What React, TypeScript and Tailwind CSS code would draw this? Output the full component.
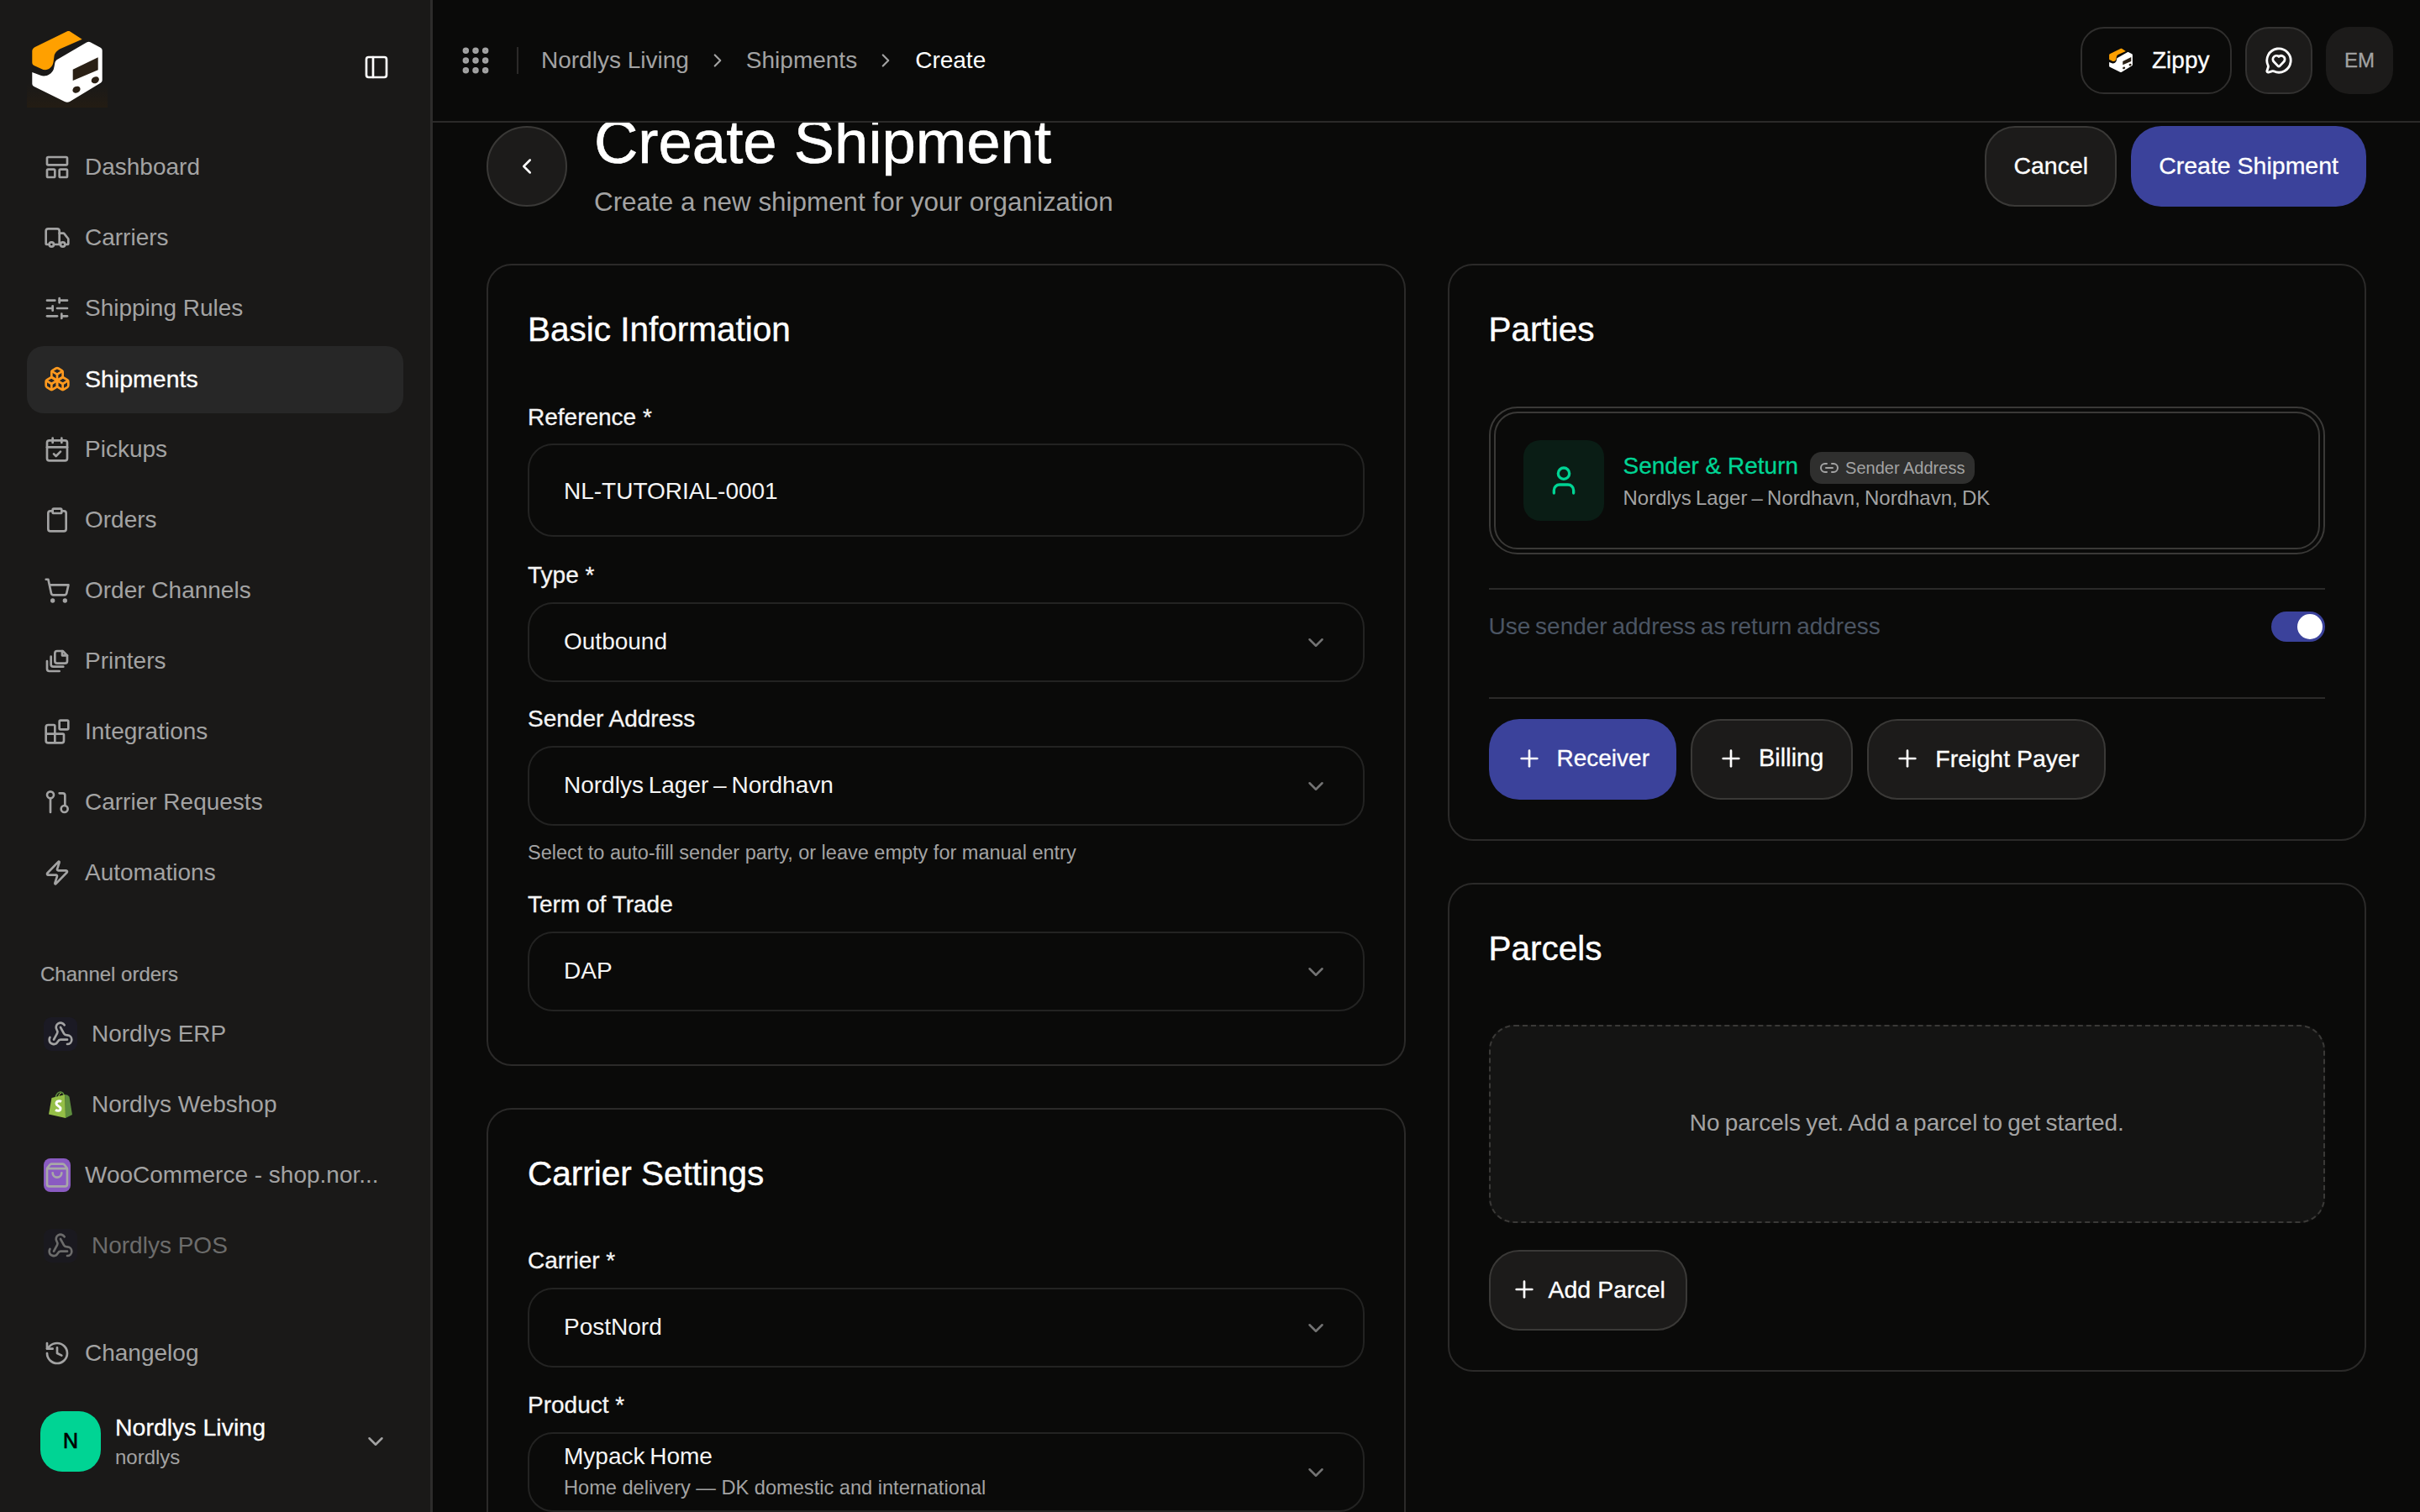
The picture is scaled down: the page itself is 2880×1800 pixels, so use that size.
import React from "react";
import {
  LayoutPanelTop, Truck, SlidersHorizontal, Boxes, CalendarCheck, Clipboard, ShoppingCart, Blocks, Zap,
  History, ChevronDown, ChevronRight, ChevronLeft, PanelLeft, Grip, MessageCircleHeart, Webhook, ShoppingBag,
  User, Link2, Plus,
} from "lucide-react";

const Logo = ({ className }: { className?: string }) => (
  <svg viewBox="0 0 96 96" className={className}>
    <path d="M48 5.300c1-.4 2-.4 3 0L65.700 14.700 40 26c-4 2-7 5-7.500 9l-1 7c-1 6-6 10-12 9l-11-5c-1.500-.7-2.200-2-2.200-3.500V29c0-2 1-4 3.400-5z" fill="#ffa000" />
    <path d="M71 18.500c2-1 3.500-1 5 0l11.700 6.300c1.400.8 2 2 2 3.500v35c0 1.500-.7 2.800-2 3.500L51 89c-2 1-4 1-6 0L8.500 71c-1.500-.7-2.200-2-2.200-3.500V54l10 3.800c6 2 13-1 15.500-7.300.8-2.500 1-5 1.500-7.500.5-2 1.500-3.500 3.500-4.500z" fill="#fff" />
    <path d="M54.700 50.700 84.700 36.300v15L54.700 64z" fill="#2a2015" />
    <ellipse cx="59" cy="74.700" rx="4.800" ry="3.800" transform="rotate(-28 59 74.700)" fill="#2a2015" />
    <ellipse cx="81.300" cy="63.300" rx="4.800" ry="3.800" transform="rotate(-28 81.300 63.300)" fill="#2a2015" />
  </svg>
);

const PrintersIcon = ({ className }: { className?: string }) => (
  <svg viewBox="0 0 24 24" fill="none" stroke="currentColor" strokeWidth="2" strokeLinecap="round" strokeLinejoin="round" className={className}>
    <path d="M10 5a2 2 0 0 1 2-2h5l4 4v5a2 2 0 0 1-2 2h-7a2 2 0 0 1-2-2z" />
    <path d="M16.500 3v4H21" />
    <path d="M6.500 8v7a2 2 0 0 0 2 2h9" />
    <path d="M3 12v7a2 2 0 0 0 2 2h9" />
  </svg>
);

const RequestsIcon = ({ className }: { className?: string }) => (
  <svg viewBox="0 0 24 24" fill="none" stroke="currentColor" strokeWidth="2" strokeLinecap="round" strokeLinejoin="round" className={className}>
    <circle cx="6" cy="5.500" r="3" />
    <path d="M6 8.500V21" />
    <path d="M14 4h3a2 2 0 0 1 2 2v9" />
    <circle cx="18.500" cy="18" r="3" />
  </svg>
);

const navItems = [
  { label: "Dashboard", Icon: LayoutPanelTop },
  { label: "Carriers", Icon: Truck },
  { label: "Shipping Rules", Icon: SlidersHorizontal },
  { label: "Shipments", Icon: Boxes, active: true },
  { label: "Pickups", Icon: CalendarCheck },
  { label: "Orders", Icon: Clipboard },
  { label: "Order Channels", Icon: ShoppingCart },
  { label: "Printers", Icon: PrintersIcon },
  { label: "Integrations", Icon: Blocks },
  { label: "Carrier Requests", Icon: RequestsIcon },
  { label: "Automations", Icon: Zap },
];

const WebhookBox = () => (
  <span className="flex h-[40px] w-[40px] shrink-0 items-center justify-center rounded-[9px] bg-[#1b1a24]">
    <Webhook className="h-[32px] w-[32px] text-[#a3a3a3]" strokeWidth={2} />
  </span>
);

const ShopifyBox = () => (
  <span className="flex h-[40px] w-[40px] shrink-0 items-center justify-center">
    <svg viewBox="0 0 28 32" className="h-[32px] w-[28px]">
      <path d="M8 8.500C8.500 3 12 .5 14.500 1c2.500.5 3.500 3 3.500 5" fill="none" stroke="#5e8e3e" strokeWidth="1.500" />
      <path d="M11.500 7.500C12 4 13.500 2.500 15 2.500" fill="none" stroke="#95bf47" strokeWidth="1.200" />
      <path d="M0 27.500 3.500 8 19.500 4 20 32z" fill="#95bf47" />
      <path d="M19.500 4l3 .8 2 2L28 28l-8 4z" fill="#5e8e3e" />
      <path d="M15 12.500c-2-1.200-6-1-6 2.200 0 3 5 3 5 6 0 3-3.500 3.200-6 1.500" fill="none" stroke="#fff" strokeWidth="3" />
    </svg>
  </span>
);

const WooBox = () => (
  <span className="flex h-[40px] w-[32px] shrink-0 items-center justify-center rounded-[8px] bg-[#8a5bc2]">
    <ShoppingBag className="h-[32px] w-[32px] text-[#a8a8a8]" strokeWidth={2} />
  </span>
);

const Label = ({ children }: { children: React.ReactNode }) => (
  <div className="text-[28px] leading-[36px] text-[#f5f5f5] [-webkit-text-stroke:0.3px_currentColor]">{children}</div>
);

const Select = ({ value, sub }: { value: string; sub?: string }) => (
  <div className="mt-[14px] flex h-[95px] items-center justify-between rounded-[30px] border-2 border-[#232322] pl-[41px] pr-[41px]">
    <div>
      <div className={sub ? "text-[28px] leading-[36px] text-[#f5f5f5] [word-spacing:-2px]" : "-translate-y-[1px] text-[28px] leading-[36px] text-[#f5f5f5] [word-spacing:-2px]"}>{value}</div>
      {sub && <div className="text-[23.600px] leading-[38px] text-[#a3a3a3]">{sub}</div>}
    </div>
    <ChevronDown className="h-[30px] w-[30px] text-[#737373]" strokeWidth={2} />
  </div>
);

const Btn = ({ children, className }: { children: React.ReactNode; className: string }) => (
  <button className={"flex h-[96px] items-center rounded-[36px] pb-[2px] text-white [-webkit-text-stroke:0.3px_currentColor] " + className}>
    {children}
  </button>
);

const Card = ({ title, children }: { title: string; children: React.ReactNode }) => (
  <section className="rounded-[30px] border-2 border-[#2b2a29] px-[47px] pb-[47px] pt-[48px]">
    <h2 className="text-[40.500px] leading-[56px] text-white [-webkit-text-stroke:0.4px_currentColor]">{title}</h2>
    {children}
  </section>
);

export default function App() {
  return (
    <div className="flex h-screen w-screen overflow-hidden bg-[#0a0a09] font-['Liberation_Sans',sans-serif] text-white">
      <aside className="flex w-[515px] shrink-0 flex-col border-r-[3px] border-[#2d2c2b] bg-[#1a1918] pb-[48px]">
        <div className="flex items-center justify-between pl-[32px] pr-[48px] pt-[32px]">
          <div className="h-[96px] w-[96px] bg-gradient-to-b from-transparent from-70% to-[#231c13]">
            <Logo className="h-[96px] w-[96px]" />
          </div>
          <PanelLeft className="h-[32px] w-[32px] text-white" strokeWidth={2} />
        </div>
        <nav className="mt-[32px] flex flex-col gap-[4px] px-[32px]">
          {navItems.map(({ label, Icon, active }) => (
            <div
              key={label}
              className={
                active
                  ? "flex h-[80px] items-center gap-[17px] rounded-[20px] bg-[#272727] pb-[2px] pl-[20px] text-[28.500px] text-white [-webkit-text-stroke:0.3px_currentColor]"
                  : "flex h-[80px] items-center gap-[17px] rounded-[20px] pb-[2px] pl-[20px] text-[28px] text-[#a3a3a3]"
              }
            >
              <Icon className={active ? "h-[32px] w-[32px] text-[#ff9a1f]" : "h-[32px] w-[32px]"} />
              {label}
            </div>
          ))}
        </nav>
        <div className="ml-[48px] mt-[64px] text-[24px] leading-[32px] text-[#a3a3a3] [-webkit-text-stroke:0.2px_currentColor]">Channel orders</div>
        <div className="mt-[15px] flex flex-col gap-[4px] pl-[52px] pr-[32px] text-[28px] text-[#a3a3a3]">
          <div className="flex h-[80px] items-center gap-[17px]"><WebhookBox />Nordlys ERP</div>
          <div className="flex h-[80px] items-center gap-[17px]"><ShopifyBox />Nordlys Webshop</div>
          <div className="flex h-[80px] items-center gap-[17px]"><WooBox /><span className="truncate">WooCommerce - shop.nor...</span></div>
          <div className="flex h-[80px] items-center gap-[17px] opacity-60"><WebhookBox />Nordlys POS</div>
        </div>
        <div className="mt-auto flex h-[80px] items-center gap-[17px] pl-[52px] text-[28px] text-[#a3a3a3]">
          <History className="h-[32px] w-[32px]" />
          Changelog
        </div>
        <div className="mt-[29px] flex items-center pl-[48px] pr-[50px]">
          <div className="flex h-[72px] w-[72px] items-center justify-center rounded-[26px] bg-[#00d494] text-[25px] text-black [-webkit-text-stroke:0.7px_currentColor]">N</div>
          <div className="ml-[17px] flex-1">
            <div className="text-[28.500px] leading-[38px] text-white [-webkit-text-stroke:0.3px_currentColor]">Nordlys Living</div>
            <div className="text-[24px] leading-[34px] text-[#a3a3a3]">nordlys</div>
          </div>
          <ChevronDown className="h-[30px] w-[30px] text-[#a3a3a3]" />
        </div>
      </aside>

      <main className="flex min-w-0 flex-1 flex-col">
        <header className="flex h-[146px] shrink-0 items-center justify-between border-b-2 border-[#2b2a29] pl-[31px] pr-[32px]">
          <div className="flex items-center text-[28px]">
            <Grip className="h-[40px] w-[40px] text-[#a3a3a3]" strokeWidth={2.500} />
            <span className="ml-[29px] h-[32px] w-[2px] bg-[#2b2a29]" />
            <span className="ml-[27px] text-[#a3a3a3]">Nordlys Living</span>
            <ChevronRight className="ml-[21px] mr-[21px] h-[26px] w-[26px] text-[#a3a3a3]" strokeWidth={2} />
            <span className="text-[#a3a3a3]">Shipments</span>
            <ChevronRight className="ml-[21px] mr-[22px] h-[26px] w-[26px] text-[#a3a3a3]" strokeWidth={2} />
            <span className="text-white">Create</span>
          </div>
          <div className="flex items-center gap-[16px]">
            <div className="flex h-[80px] w-[180px] items-center gap-[21px] rounded-[28px] border-2 border-[#2f2e2d] pl-[30px] text-[28px] [-webkit-text-stroke:0.3px_currentColor]">
              <Logo className="h-[32px] w-[32px]" />
              Zippy
            </div>
            <div className="flex h-[80px] w-[80px] items-center justify-center rounded-[28px] border-2 border-[#333231] bg-[#1c1b1a]">
              <MessageCircleHeart className="h-[34px] w-[34px] text-white" strokeWidth={2} />
            </div>
            <div className="flex h-[80px] w-[80px] items-center justify-center rounded-[28px] bg-[#1c1b1a] text-[24px] text-[#a3a3a3] [-webkit-text-stroke:0.3px_currentColor]">EM</div>
          </div>
        </header>

        <div className="min-h-0 flex-1 overflow-hidden px-[64px] pt-[4px]">
          <div className="mb-[68px] flex h-[96px] items-start justify-between">
            <div className="flex items-start gap-[32px]">
              <button className="flex h-[96px] w-[96px] shrink-0 items-center justify-center rounded-full border-2 border-[#3a3937] bg-[#1c1b1a]">
                <ChevronLeft className="h-[30px] w-[30px] text-white" strokeWidth={2} />
              </button>
              <div>
                <h1 className="-mt-[14px] text-[72.500px] leading-[66px] text-white [-webkit-text-stroke:0.6px_currentColor]">Create Shipment</h1>
                <p className="mt-[21px] text-[31.400px] leading-[36px] text-[#a3a3a3]">Create a new shipment for your organization</p>
              </div>
            </div>
            <div className="flex gap-[17px]">
              <Btn className="border-2 border-[#3a3937] bg-[#1c1b1a] px-[32px] text-[28.500px]">Cancel</Btn>
              <Btn className="bg-[#3b429b] px-[33px] text-[28.500px]">Create Shipment</Btn>
            </div>
          </div>

          <div className="grid grid-cols-2 items-start gap-[50px]">
            <div className="flex flex-col gap-[50px]">
              <Card title="Basic Information">
                <div className="mt-[59px] pb-[16px]">
                  <Label>Reference *</Label>
                  <div className="mt-[13px] flex h-[111px] items-center rounded-[30px] border-2 border-[#232322] px-[41px] pt-[2px] text-[28px] text-[#f5f5f5]">NL-TUTORIAL-0001</div>
                  <div className="mt-[28px]"><Label>Type *</Label><Select value="Outbound" /></div>
                  <div className="mt-[26px]"><Label>Sender Address</Label><Select value="Nordlys Lager – Nordhavn" /></div>
                  <p className="mt-[16px] text-[23.500px] leading-[32px] text-[#a3a3a3]">Select to auto-fill sender party, or leave empty for manual entry</p>
                  <div className="mt-[28px]"><Label>Term of Trade</Label><Select value="DAP" /></div>
                </div>
              </Card>
              <Card title="Carrier Settings">
                <div className="mt-[58px]">
                  <Label>Carrier *</Label>
                  <Select value="PostNord" />
                  <div className="mt-[27px]"><Label>Product *</Label><Select value="Mypack Home" sub="Home delivery — DK domestic and international" /></div>
                </div>
              </Card>
            </div>

            <div className="flex flex-col gap-[50px]">
              <Card title="Parties">
                <div className="mt-[64px] rounded-[34px] border-2 border-[#3a3937] p-[4px]">
                  <div className="flex h-[164px] items-center gap-[23px] rounded-[28px] border-2 border-[#3a3937] pl-[33px]">
                    <div className="flex h-[96px] w-[96px] items-center justify-center rounded-[20px] bg-[#0a1d15]">
                      <User className="h-[40px] w-[40px] text-[#00d494]" strokeWidth={2} />
                    </div>
                    <div>
                      <div className="flex translate-y-[1px] items-center gap-[14px]">
                        <span className="text-[28px] text-[#00d494] [-webkit-text-stroke:0.3px_currentColor]">Sender &amp; Return</span>
                        <span className="flex h-[38px] translate-y-[2px] items-center gap-[7px] rounded-[14px] bg-[#2f2f2e] pl-[11px] pr-[12px] text-[20px] text-[#a3a3a3]">
                          <Link2 className="h-[24px] w-[24px]" />
                          Sender Address
                        </span>
                      </div>
                      <div className="text-[24px] leading-[36px] text-[#a3a3a3] [word-spacing:-1.500px]">Nordlys Lager – Nordhavn, Nordhavn, DK</div>
                    </div>
                  </div>
                </div>
                <div className="mt-[40px] h-[2px] bg-[#2b2a29]" />
                <div className="flex h-[128px] items-start justify-between pt-[26px]">
                  <span className="text-[28px] leading-[36px] text-[#4b5563] [word-spacing:-2px]">Use sender address as return address</span>
                  <span className="flex h-[36px] w-[64px] items-center justify-end rounded-full bg-[#3b429b] pr-[3px]">
                    <span className="h-[30px] w-[30px] rounded-full bg-white" />
                  </span>
                </div>
                <div className="h-[2px] bg-[#2b2a29]" />
                <div className="mt-[24px] flex gap-[17px]">
                  <Btn className="gap-[17px] bg-[#3b429b] px-[32px] text-[28px]"><Plus className="h-[32px] w-[32px]" strokeWidth={2} />Receiver</Btn>
                  <Btn className="gap-[17px] border-2 border-[#3a3937] bg-[#1c1b1a] pl-[30px] pr-[33px] text-[29px]"><Plus className="h-[32px] w-[32px]" strokeWidth={2} />Billing</Btn>
                  <Btn className="gap-[17px] border-2 border-[#3a3937] bg-[#1c1b1a] px-[30px] text-[28.500px]"><Plus className="h-[32px] w-[32px]" strokeWidth={2} />Freight Payer</Btn>
                </div>
              </Card>
              <Card title="Parcels">
                <div className="mt-[63px] flex h-[236px] items-center justify-center rounded-[30px] border-2 border-dashed border-[#3a3937] bg-[#141413] pb-[2px] text-[28px] text-[#a3a3a3] [word-spacing:-1.500px]">
                  No parcels yet. Add a parcel to get started.
                </div>
                <div className="mt-[32px] flex">
                  <Btn className="gap-[13px] border-2 border-[#3a3937] bg-[#1c1b1a] px-[24px] text-[28.500px]"><Plus className="h-[32px] w-[32px]" strokeWidth={2} />Add Parcel</Btn>
                </div>
              </Card>
            </div>
          </div>
        </div>
      </main>
    </div>
  );
}
